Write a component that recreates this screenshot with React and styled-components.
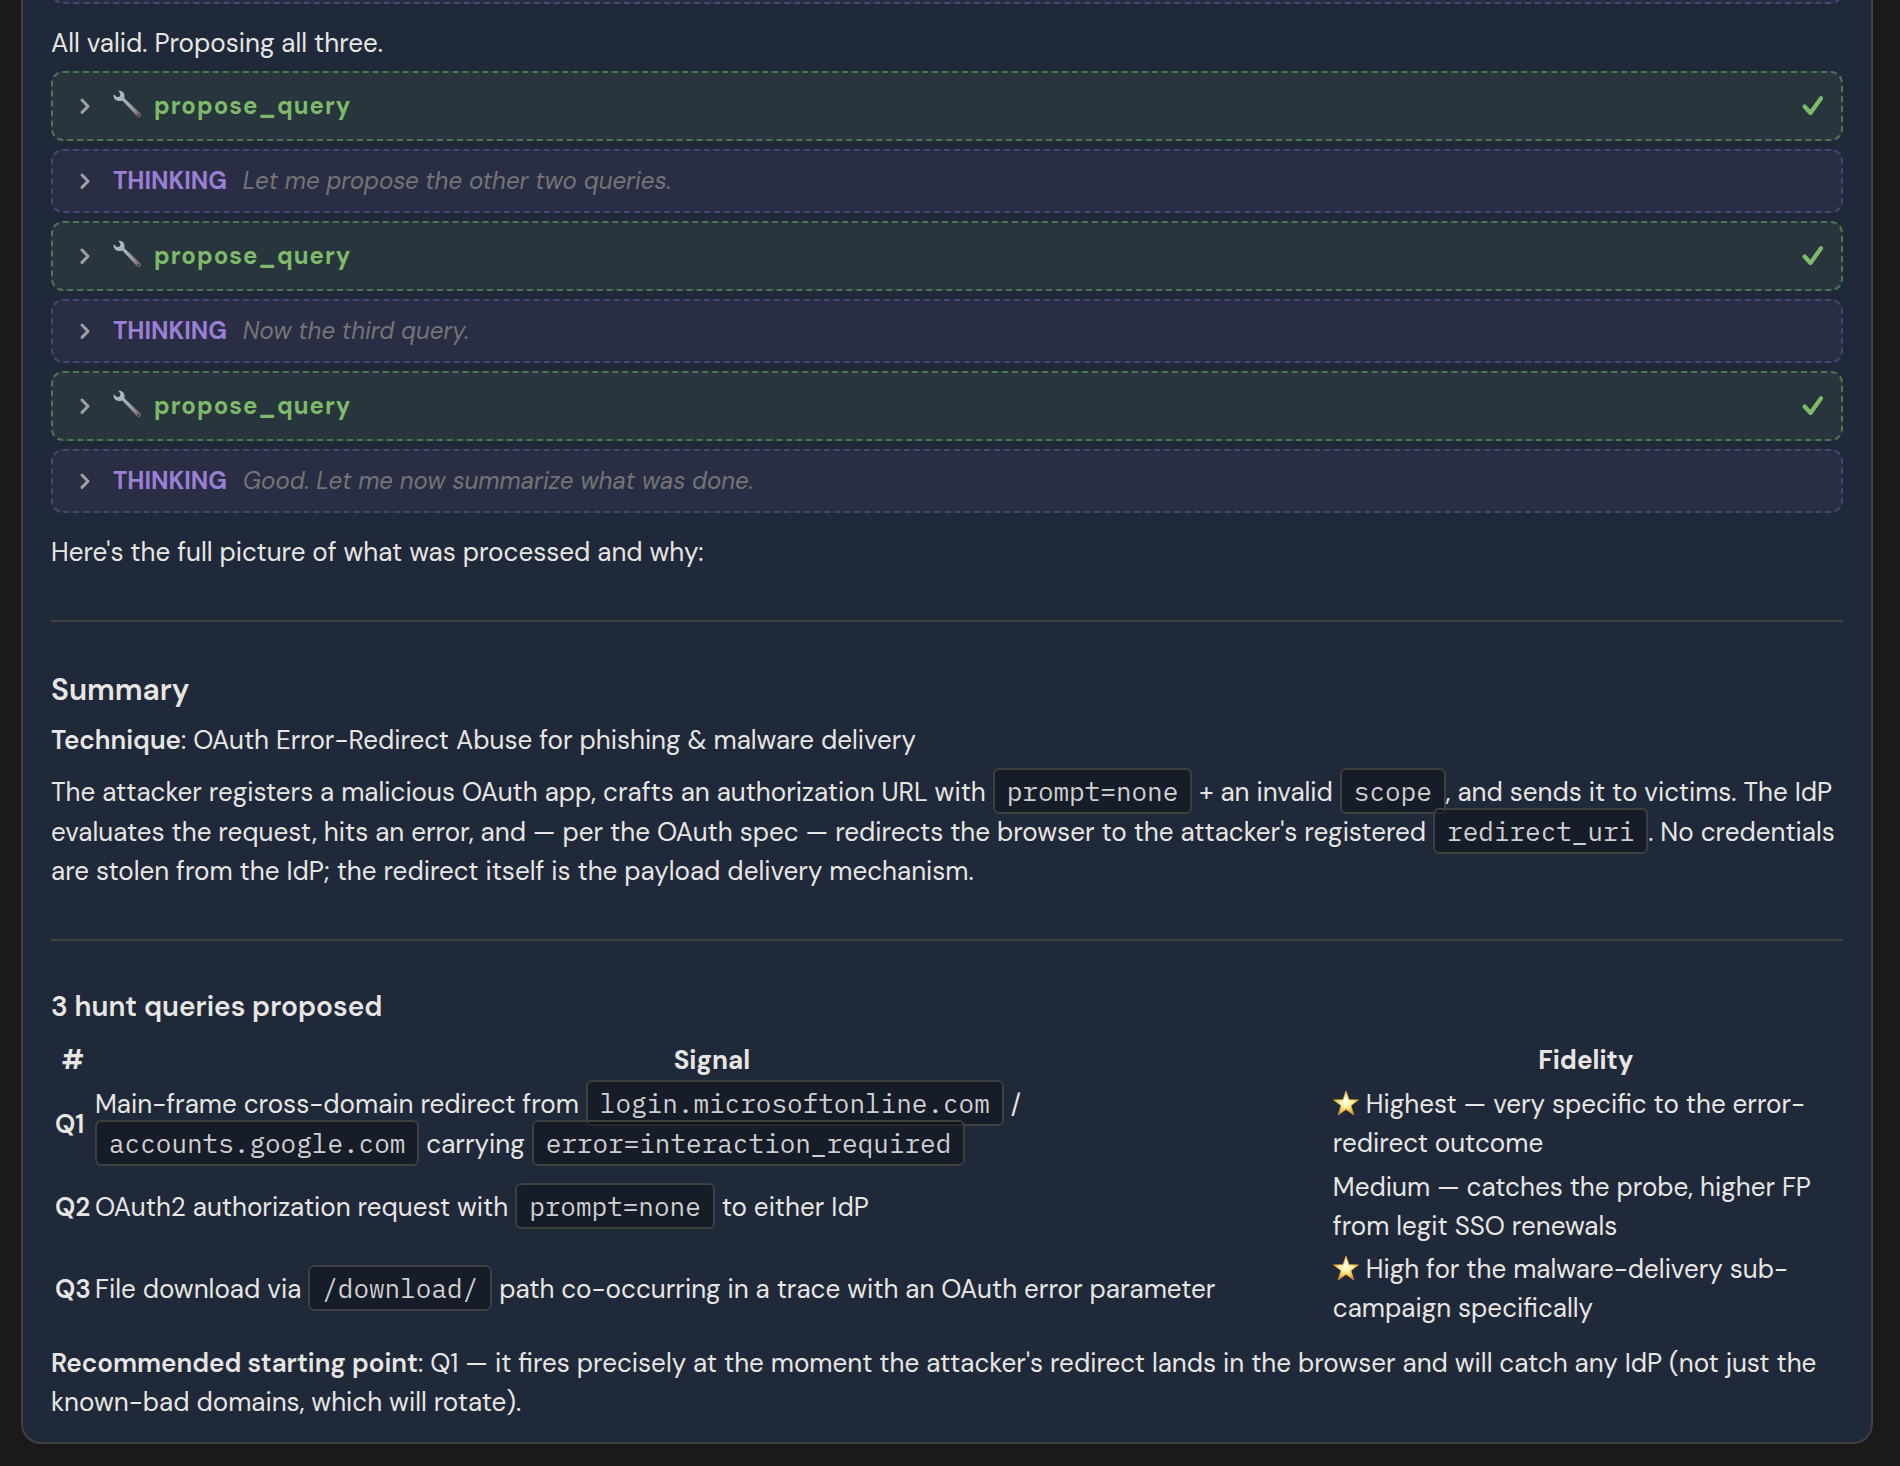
import styled, { createGlobalStyle } from "styled-components";

const colors = {
  page: "#1a1a1a",
  card: "#20293a",
  line: "#404040",
  text: "#e8e6e3",
  muted: "#757575",
  chevron: "#a0a0a0",
  green: "#7dbb6a",
  greenLine: "#4d7453",
  greenBg: "#28353c",
  purple: "#9b7fd4",
  purpleLine: "#4a4672",
  purpleBg: "#2a2e45",
};

const GlobalStyle = createGlobalStyle`
  body {
    margin: 0;
    background: ${colors.page};
    color: ${colors.text};
    font-family: "DM Sans", "Open Sans", sans-serif;
    font-size: 26px;
    line-height: 39px;
    -webkit-font-smoothing: antialiased;
  }
`;

const Message = styled.main`
  margin: 0 27px 22px 21px;
  padding: 0 28px 20px;
  border: solid 2px ${colors.line};
  border-top: none;
  border-radius: 0 0 20px 20px;
  background: ${colors.card};
`;

const Steps = styled.div`
  display: flex;
  flex-direction: column;
  gap: 8px;
`;

/* only the end of the previous step stays in view */
const ScrolledStep = styled.div`
  display: flex;
  flex-direction: column;
  justify-content: flex-end;
  height: 4px;
  overflow: hidden;
`;

const Step = styled.button`
  display: flex;
  flex-shrink: 0;
  align-items: center;
  width: 100%;
  min-height: ${(props) => (props.$tool ? "70px" : "64px")};
  box-sizing: border-box;
  margin: 0;
  padding: 0 16px 0 20px;
  border: dashed 2px ${(props) => (props.$tool ? colors.greenLine : colors.purpleLine)};
  border-radius: 12px;
  background: ${(props) => (props.$tool ? colors.greenBg : colors.purpleBg)};
  font-family: inherit;
  font-size: 24px;
  line-height: 36px;
  text-align: left;
  cursor: pointer;

  .chevron {
    margin-right: 16px;
  }
  .wrench {
    margin-right: 12px;
  }
  .check {
    margin-left: auto;
  }
`;

const ToolName = styled.span`
  color: ${colors.green};
  font-weight: 700;
  letter-spacing: 1px;
`;

const ThinkingLabel = styled.span`
  margin-right: 16px;
  color: ${colors.purple};
  font-weight: 700;
`;

const Preview = styled.span`
  color: ${colors.muted};
  font-style: italic;
`;

const Text = styled.p`
  margin: ${(props) => props.$margin || "12px 0"};

  strong {
    font-weight: 600;
  }
`;

const Divider = styled.hr`
  height: 2px;
  margin: 48px 0;
  border: none;
  background: ${colors.line};
`;

const Title = styled.h2`
  margin: 0 0 12px;
  font-size: 30px;
  font-weight: 600;
  line-height: 39px;
`;

const Subtitle = styled.h3`
  margin: 0 0 12px;
  font-size: 28px;
  font-weight: 600;
  line-height: 36px;
`;

const Code = styled.code`
  padding: 4px 12px;
  border: solid 2px ${colors.line};
  border-radius: 6px;
  background: rgba(0, 0, 0, 0.3);
  color: #d0d0d0;
  font-family: "IBM Plex Mono", "Liberation Mono", monospace;
  font-size: 26px;
`;

const Table = styled.table`
  width: 100%;
  border-spacing: 4px;
  table-layout: fixed;

  th,
  td {
    padding: 0;
  }
  th {
    font-weight: 700;
  }
  tbody th {
    font-weight: 600;
    text-align: left;
  }
  .number {
    width: 36px;
  }
  .fidelity {
    width: 28.5%;
  }
  .star {
    vertical-align: -3px;
  }
`;

const Chevron = () => (
  <svg className="chevron" width="24" height="24" viewBox="0 0 24 24" aria-hidden="true">
    <path
      d="M9 6l6 6.2-6 6.2"
      fill="none"
      stroke={colors.chevron}
      strokeWidth="3"
      strokeLinecap="round"
      strokeLinejoin="round"
    />
  </svg>
);

const Wrench = () => (
  <svg className="wrench" width="29" height="32" viewBox="0 0 29 32" aria-hidden="true">
    <defs>
      <linearGradient id="steel" x1="0" y1="0" x2="1" y2="1">
        <stop offset="0" stopColor="#b9cbd6" />
        <stop offset="0.5" stopColor="#9aa3ad" />
        <stop offset="1" stopColor="#75595c" />
      </linearGradient>
    </defs>
    <path
      d="M5.2.8C8.6.2 11.7 2.7 11.5 6.2L11.4 8.2L26.8 22.8C28.3 24.3 28.2 25.8 27.2 26.7C26 27.7 24.5 27.3 23.5 26.1L9.3 10.5C6.8 11.5 3.7 11.2 1.8 9C.7 7.7.3 5.8.8 4.2L3.8 7.2L6.9 6.6L7.5 3.6Z"
      fill="url(#steel)"
    />
    <path d="M10.5 9.6L23 22.5" stroke="#c3cbd3" strokeWidth="1" fill="none" opacity="0.6" />
    <circle cx="25.4" cy="24.9" r="1" fill="#28353c" />
  </svg>
);

const Check = () => (
  <svg className="check" width="24" height="24" viewBox="0 0 24 24" aria-label="done">
    <path
      d="M3.6 12.5L9.5 19L20 4.2"
      fill="none"
      stroke={colors.green}
      strokeWidth="4.2"
      strokeLinecap="round"
      strokeLinejoin="round"
    />
  </svg>
);

const Star = () => (
  <svg className="star" width="26" height="26" viewBox="0 0 26 26" role="img" aria-label="star">
    <defs>
      <radialGradient id="gold" cx="0.5" cy="0.42" r="0.58">
        <stop offset="0" stopColor="#fffef0" />
        <stop offset="0.4" stopColor="#fdf3a8" />
        <stop offset="0.75" stopColor="#f3c64c" />
        <stop offset="1" stopColor="#d98e2b" />
      </radialGradient>
    </defs>
    <path
      d="M13 1L16 9.7L25.4 9.9L18 15.6L20.7 24.8L13 19.4L5.3 24.8L8 15.6L.6 9.9L10 9.7Z"
      fill="url(#gold)"
      stroke="#e0a23c"
      strokeWidth="0.8"
      strokeLinejoin="round"
    />
  </svg>
);

const ToolStep = ({ name }) => (
  <Step type="button" $tool>
    <Chevron />
    <Wrench />
    <ToolName>{name}</ToolName>
    <Check />
  </Step>
);

const ThinkingStep = ({ text }) => (
  <Step type="button">
    <Chevron />
    <ThinkingLabel>THINKING</ThinkingLabel>
    <Preview>{text}</Preview>
  </Step>
);

const thoughts = [
  "Let me propose the other two queries.",
  "Now the third query.",
  "Good. Let me now summarize what was done.",
];

const App = () => {
  return (
    <>
      <GlobalStyle />
      <Message>
        <ScrolledStep>
          <Step type="button" aria-label="Previous step" />
        </ScrolledStep>
        <Text $margin="20px 0 8px">All valid. Proposing all three.</Text>
        <Steps>
          {thoughts.flatMap((text) => [
            <ToolStep key={"tool " + text} name="propose_query" />,
            <ThinkingStep key={text} text={text} />,
          ])}
        </Steps>
        <Text $margin="20px 0 0">Here's the full picture of what was processed and why:</Text>
        <Divider />
        <Title>Summary</Title>
        <Text>
          <strong>Technique</strong>: OAuth Error-Redirect Abuse for phishing &amp; malware delivery
        </Text>
        <Text>
          The attacker registers a malicious OAuth app, crafts an authorization URL with{" "}
          <Code>prompt=none</Code> + an invalid <Code>scope</Code>, and sends it to victims. The IdP
          evaluates the request, hits an error, and — per the OAuth spec — redirects the browser to
          the attacker's registered <Code>redirect_uri</Code>. No credentials are stolen from the
          IdP; the redirect itself is the payload delivery mechanism.
        </Text>
        <Divider />
        <Subtitle>3 hunt queries proposed</Subtitle>
        <Table>
          <thead>
            <tr>
              <th className="number">#</th>
              <th>Signal</th>
              <th className="fidelity">Fidelity</th>
            </tr>
          </thead>
          <tbody>
            <tr>
              <th scope="row">Q1</th>
              <td>
                Main-frame cross-domain redirect from <Code>login.microsoftonline.com</Code> /{" "}
                <Code>accounts.google.com</Code> carrying <Code>error=interaction_required</Code>
              </td>
              <td>
                <Star /> Highest — very specific to the error-redirect outcome
              </td>
            </tr>
            <tr>
              <th scope="row">Q2</th>
              <td>
                OAuth2 authorization request with <Code>prompt=none</Code> to either IdP
              </td>
              <td>Medium — catches the probe, higher FP from legit SSO renewals</td>
            </tr>
            <tr>
              <th scope="row">Q3</th>
              <td>
                File download via <Code>/download/</Code> path co-occurring in a trace with an OAuth
                error parameter
              </td>
              <td>
                <Star /> High for the malware-delivery sub-campaign specifically
              </td>
            </tr>
          </tbody>
        </Table>
        <Text $margin="12px 0 0">
          <strong>Recommended starting point</strong>: Q1 — it fires precisely at the moment the
          attacker's redirect lands in the browser and will catch any IdP (not just the known-bad
          domains, which will rotate).
        </Text>
      </Message>
    </>
  );
};

export default App;
